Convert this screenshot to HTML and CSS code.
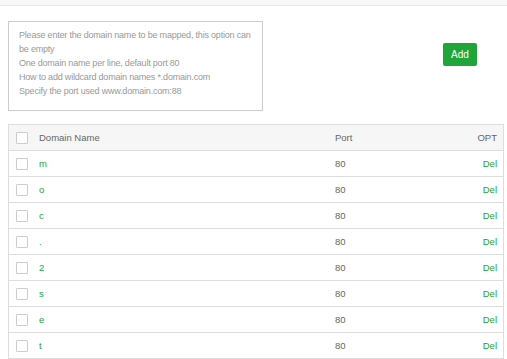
FILE: index.html
```html
<!DOCTYPE html>
<html>
<head>
<meta charset="utf-8">
<link rel="stylesheet" href="styles.css">
</head>
<body>
<div class="topbar"></div>
<div class="content">
  <div class="form-row">
    <textarea class="domains" placeholder="Please enter the domain name to be mapped, this option can be empty
One domain name per line, default port 80
How to add wildcard domain names *.domain.com
Specify the port used www.domain.com:88"></textarea>
    <button class="btn-add">Add</button>
  </div>
  <table class="list">
    <thead>
      <tr><th class="c-chk"><span class="chk"></span></th><th class="c-name">Domain Name</th><th class="c-port">Port</th><th class="c-opt">OPT</th></tr>
    </thead>
    <tbody>
      <tr><td class="c-chk"><span class="chk"></span></td><td class="c-name name">m</td><td class="c-port">80</td><td class="c-opt"><a class="del">Del</a></td></tr>
      <tr><td class="c-chk"><span class="chk"></span></td><td class="c-name name">o</td><td class="c-port">80</td><td class="c-opt"><a class="del">Del</a></td></tr>
      <tr><td class="c-chk"><span class="chk"></span></td><td class="c-name name">c</td><td class="c-port">80</td><td class="c-opt"><a class="del">Del</a></td></tr>
      <tr><td class="c-chk"><span class="chk"></span></td><td class="c-name name">.</td><td class="c-port">80</td><td class="c-opt"><a class="del">Del</a></td></tr>
      <tr><td class="c-chk"><span class="chk"></span></td><td class="c-name name">2</td><td class="c-port">80</td><td class="c-opt"><a class="del">Del</a></td></tr>
      <tr><td class="c-chk"><span class="chk"></span></td><td class="c-name name">s</td><td class="c-port">80</td><td class="c-opt"><a class="del">Del</a></td></tr>
      <tr><td class="c-chk"><span class="chk"></span></td><td class="c-name name">e</td><td class="c-port">80</td><td class="c-opt"><a class="del">Del</a></td></tr>
      <tr><td class="c-chk"><span class="chk"></span></td><td class="c-name name">t</td><td class="c-port">80</td><td class="c-opt"><a class="del">Del</a></td></tr>
    </tbody>
  </table>
</div>
</body>
</html>
```
FILE: styles.css
```css
html, body {
  margin: 0;
  padding: 0;
  background: #fff;
  font-family: "Liberation Sans", Arial, sans-serif;
  font-size: 9.5px;
  color: #666;
}
.topbar {
  height: 5px;
  background: #f8f8f8;
  border-bottom: 1px solid #e8e8e8;
}
.content {
  padding: 15px 0 0 8px;
}
.form-row {
  display: flex;
  justify-content: space-between;
  align-items: flex-start;
  padding-right: 30px;
}
.domains {
  box-sizing: border-box;
  width: 255px;
  height: 90px;
  margin: 0;
  padding: 6px 3px 6px 10px;
  border: 1px solid #ccc;
  resize: none;
  font-family: "Liberation Sans", Arial, sans-serif;
  font-size: 9px;
  letter-spacing: -0.2px;
  line-height: 14px;
  color: #666;
  outline: none;
}
.domains::placeholder {
  color: #999;
}
.btn-add {
  margin-top: 22px;
  width: 34px;
  height: 23px;
  padding: 0;
  border: none;
  border-radius: 2px;
  background: #20a53a;
  color: #fff;
  font-family: "Liberation Sans", Arial, sans-serif;
  font-size: 10px;
}
.list {
  margin-top: 13px;
  width: 496px;
  border-collapse: collapse;
  border: 1px solid #ddd;
  table-layout: fixed;
}
.list th, .list td {
  height: 25px;
  padding: 0;
  border-bottom: 1px solid #ddd;
  text-align: left;
  font-weight: normal;
  font-size: 9.5px;
  color: #666;
}
.list thead th {
  background: #f6f6f6;
}
.c-chk { width: 30px; }
.c-name { width: 296px; }
.c-port { width: auto; }
.c-opt { width: 60px; text-align: right !important; padding-right: 6px !important; }
.chk {
  display: block;
  box-sizing: border-box;
  width: 12px;
  height: 12px;
  margin-left: 7px;
  border: 1px solid #ccc;
  border-radius: 1px;
  background: #fff;
}
.name { color: #20a53a !important; }
.del { color: #20a53a; text-decoration: none; }
```
